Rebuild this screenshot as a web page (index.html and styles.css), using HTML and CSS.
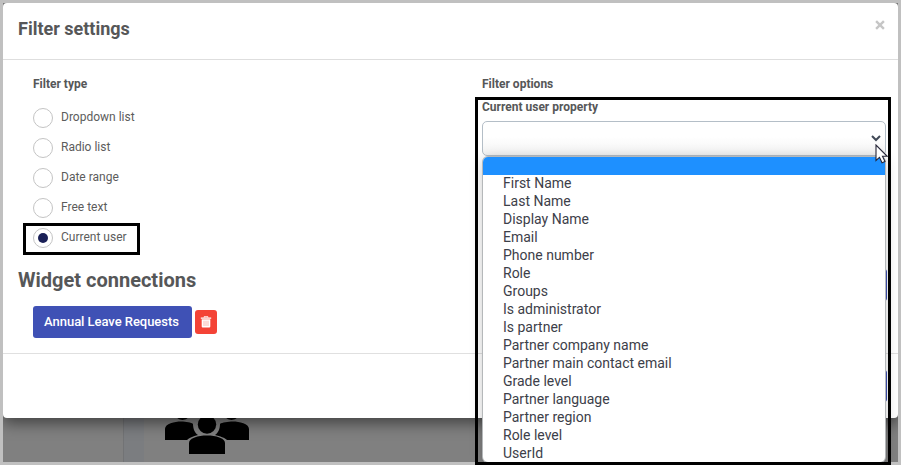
FILE: index.html
```html
<!DOCTYPE html>
<html lang="en">
<head>
<meta charset="utf-8">
<title>Filter settings</title>
<link rel="stylesheet" href="styles.css">
</head>
<body>
<div class="frame">
  <div class="backdrop">
    <div class="card-left"></div>
    <div class="gutter"></div>
    <svg class="people" width="86" height="54" viewBox="0 0 86 54">
      <circle cx="18.500" cy="9" r="9"/><circle cx="67.500" cy="9" r="9"/>
      <path d="M1 38V27C1 21 13 19 19 19.500C24 20 29 21 29 22C29 27 31 31 34 33C29 34 25 36 23 38Z"/>
      <path d="M85 38V27C85 21 73 19 67 19.500C62 20 56 21 56 22C56 27 54 31 51 33C56 34 61 36 63 38Z"/>
      <circle cx="43" cy="22.500" r="9.200"/>
      <path d="M25 52V41C25 31 61 31 61 41V52Z"/>
    </svg>
  </div>
  <main class="modal">
    <header class="modal-header">
      <h1>Filter settings</h1>
      <svg class="close" width="10" height="10" viewBox="0 0 10 10"><path d="M1.100 1.100L8.900 8.900M8.900 1.100L1.100 8.900"/></svg>
    </header>
    <section class="modal-body">
      <div class="columns">
        <div class="types">
          <h3>Filter type</h3>
          <label class="option"><span class="radio"></span><span>Dropdown list</span></label>
          <label class="option"><span class="radio"></span><span>Radio list</span></label>
          <label class="option"><span class="radio"></span><span>Date range</span></label>
          <label class="option"><span class="radio"></span><span>Free text</span></label>
          <label class="option"><span class="radio checked"></span><span>Current user</span></label>
        </div>
        <div class="property">
          <h3>Filter options</h3>
          <h3 class="prop-label">Current user property</h3>
          <div class="select">
            <svg width="10" height="7" viewBox="0 0 10 7"><path d="M1 1L5 5L9 1"/></svg>
            <ul class="menu">
              <li class="active"></li>
              <li>First Name</li><li>Last Name</li><li>Display Name</li><li>Email</li>
              <li>Phone number</li><li>Role</li><li>Groups</li><li>Is administrator</li>
              <li>Is partner</li><li>Partner company name</li><li>Partner main contact email</li>
              <li>Grade level</li><li>Partner language</li><li>Partner region</li>
              <li>Role level</li><li>UserId</li>
            </ul>
          </div>
        </div>
      </div>
      <div class="widgets">
        <h2>Widget connections</h2>
        <span class="action"></span>
      </div>
      <div class="connection">
        <button class="widget">Annual Leave Requests</button>
        <button class="remove" aria-label="Remove">
          <svg width="12" height="12" viewBox="0 0 12 12"><path class="can" d="M1.700 3.300H10.300V10.500Q10.300 11.500 9.300 11.500H2.700Q1.700 11.500 1.700 10.500ZM.8 1.600H11.200V2.800H.8Z"/><path class="lid" d="M4 1.500V.8H8V1.500"/><path class="ribs" d="M4 4.700V10M6 4.700V10M8 4.700V10"/></svg>
        </button>
      </div>
    </section>
    <footer class="modal-footer"><span class="action"></span></footer>
  </main>
</div>
<div class="highlight highlight-type"></div>
<div class="highlight highlight-property"></div>
<svg class="cursor" width="14" height="21" viewBox="0 0 14 21"><path d="M1 1V16.500L4.500 13.300L7 18.800L10 17.500L7.500 12.300H12.200Z"/></svg>
</body>
</html>
```
FILE: styles.css
```css
* { box-sizing: border-box; }
body { margin: 0; width: 901px; height: 465px; overflow: hidden; position: relative; font-family: Roboto, sans-serif; color: #565758; }
h1, h2, h3, ul { margin: 0; padding: 0; }
.frame { position: relative; width: 901px; height: 465px; border: 3px solid #c0c0c0; overflow: hidden; }
.backdrop { position: absolute; inset: 0; display: flex; background: #808080; overflow: hidden; }
.card-left { width: 121px; border-right: 1px solid #727375; }
.gutter { width: 20px; background: #7b7d80; }
.people { margin: 399px 0 0 20px; fill: #000; }
.modal { position: relative; height: 415px; background: #fff; border-radius: 4px; box-shadow: 0 5px 15px rgba(0,0,0,.5); }
.modal-header { height: 57px; border-bottom: 1px solid #dedede; display: flex; justify-content: space-between; padding: 15px 13px 0 15px; }
h1 { font-size: 18px; line-height: 22px; font-weight: 700; }
h2 { font-size: 20px; line-height: 22px; font-weight: 700; }
.close { margin-top: 2px; stroke: #c6c6c6; stroke-width: 2.4; fill: none; }
.modal-body { height: 294px; border-bottom: 1px solid #e0e0e0; }
.columns { display: flex; height: 206px; padding: 17px 12px 0 30px; }
.types { width: 449px; }
h3 { font-size: 12px; line-height: 14px; font-weight: 700; }
.option { display: flex; gap: 8px; height: 30px; font-size: 12px; line-height: 19px; color: #5c5c5c; }
h3 + .option { margin-top: 17px; }
.radio { width: 20px; height: 20px; border: 1px solid #c4c4c4; border-radius: 50%; display: grid; place-items: center; }
.checked::after { content: ""; width: 10px; height: 10px; border-radius: 50%; background: #1a2057; }
.property { flex: 1; }
.prop-label { margin-top: 9px; }
.select { position: relative; margin-top: 7px; width: 404px; height: 35px; border: 1px solid #b4bec7; border-radius: 5px; background: linear-gradient(#fff 45%, #f3f3f3); display: flex; justify-content: flex-end; padding: 13px 4px 0; }
.select > svg { fill: none; stroke: #414957; stroke-width: 2; }
.menu { position: absolute; z-index: 2; left: 0; top: 35px; width: 402px; height: 305px; list-style: none; background: #fff; border-radius: 5px; overflow: hidden; font-size: 14px; line-height: 16px; color: #3d4049; box-shadow: 0 0 0 1px #b5b8ba, 0 2px 14px rgba(0,0,0,.24); }
.menu li { height: 18px; padding-left: 20px; }
.menu .active { background: #1e90ff; }
.widgets { display: flex; justify-content: space-between; height: 40px; padding: 3px 11px 0 15px; }
.action { width: 60px; height: 32px; border-radius: 3px; background: #3f51b5; }
.connection { display: flex; align-items: center; gap: 3px; margin: 0 0 0 30px; height: 32px; }
button { border: 0; padding: 0; font-family: inherit; color: #fff; border-radius: 3px; }
.widget { width: 159px; height: 32px; background: #3f51b5; font-size: 13px; font-weight: 500; letter-spacing: -.04px; padding: 0 2px 1px 0; }
.remove { width: 22px; height: 24px; background: #f44336; display: grid; place-items: center; }
.can { fill: #fff; }
.lid { fill: none; stroke: #fff; }
.ribs { stroke: #f7a49d; stroke-width: .8; }
.modal-footer { display: flex; justify-content: flex-end; padding: 16px 11px 0; }
.highlight { position: absolute; z-index: 3; border: 3px solid #000; }
.highlight-type { left: 23px; top: 223px; width: 117px; height: 32px; }
.highlight-property { left: 475px; top: 97px; width: 416px; height: 368px; }
.cursor { position: absolute; z-index: 4; left: 875px; top: 144px; fill: #fff; stroke: #262638; stroke-width: 1.1; }
```
